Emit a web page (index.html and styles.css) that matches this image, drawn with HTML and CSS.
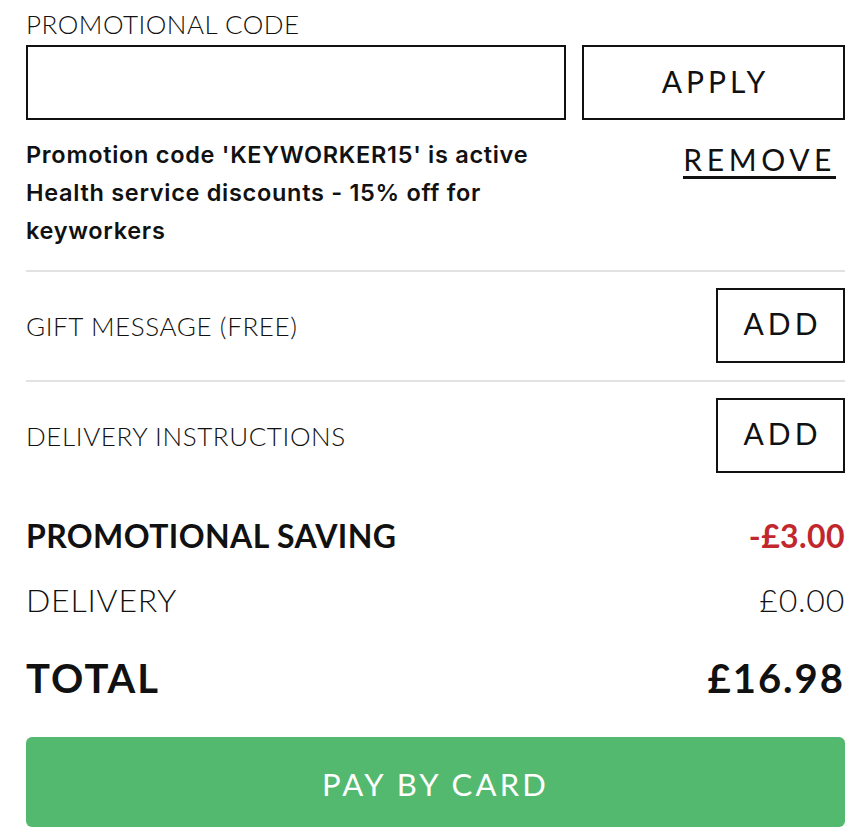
FILE: index.html
```html
<!DOCTYPE html>
<html>
<head>
<meta charset="utf-8">
<link rel="stylesheet" href="styles.css">
</head>
<body>
<div class="panel">
  <div class="label">PROMOTIONAL CODE</div>
  <div class="code-row">
    <div class="code-input"></div>
    <div class="btn apply">APPLY</div>
  </div>
  <div class="promo-row">
    <div class="promo-text">Promotion code 'KEYWORKER15' is active<br>Health service discounts - 15% off for<br>keyworkers</div>
    <div class="remove">REMOVE</div>
  </div>
  <div class="option-row first">
    <div class="option-label">GIFT MESSAGE (FREE)</div>
    <div class="btn add">ADD</div>
  </div>
  <div class="option-row last">
    <div class="option-label">DELIVERY INSTRUCTIONS</div>
    <div class="btn add">ADD</div>
  </div>
  <div class="sum-row saving">
    <div>PROMOTIONAL SAVING</div>
    <div class="red">-£3.00</div>
  </div>
  <div class="sum-row delivery">
    <div>DELIVERY</div>
    <div>£0.00</div>
  </div>
  <div class="sum-row total">
    <div>TOTAL</div>
    <div>£16.98</div>
  </div>
  <div class="pay">PAY BY CARD</div>
</div>
</body>
</html>
```

FILE: styles.css
```css
html, body {
  margin: 0;
  padding: 0;
  background: #fff;
}
body {
  font-family: Lato, "Open Sans", sans-serif;
  color: #111;
}
.panel {
  width: 819px;
  margin-left: 26px;
  display: flex;
  flex-direction: column;
}
.label {
  font-size: 26px;
  font-weight: 300;
  letter-spacing: 0.5px;
  line-height: 30px;
  margin-top: 9px;
  height: 36px;
}
.code-row {
  display: flex;
  gap: 16px;
  height: 75px;
}
.code-input {
  flex: 0 0 540px;
  box-sizing: border-box;
  border: 2.5px solid #111;
}
.btn {
  box-sizing: border-box;
  border: 2.5px solid #111;
  display: flex;
  align-items: center;
  justify-content: center;
  font-size: 30px;
  font-weight: 400;
  letter-spacing: 4px;
  padding-left: 4px;
}
.apply {
  flex: 1;
  padding-bottom: 4px;
}
.promo-row {
  display: flex;
  justify-content: space-between;
  align-items: flex-start;
  padding-top: 16px;
  padding-bottom: 20px;
  border-bottom: 2px solid #e2e2e2;
}
.promo-text {
  font-family: Inter, Lato, sans-serif;
  font-size: 23.5px;
  font-weight: 600;
  letter-spacing: 0.7px;
  line-height: 38px;
}
.remove {
  font-size: 30px;
  font-weight: 400;
  letter-spacing: 4.6px;
  line-height: 30px;
  margin-top: 8px;
  margin-right: 9px;
  padding-bottom: 2px;
  border-bottom: 3.5px solid #111;
}
.option-row {
  display: flex;
  justify-content: space-between;
  align-items: center;
  padding: 16px 0 17px;
}
.option-row.first {
  border-bottom: 2px solid #e2e2e2;
}
.option-row.last {
  padding-bottom: 0;
}
.option-label {
  font-size: 26px;
  font-weight: 300;
  letter-spacing: 0.6px;
}
.add {
  width: 129px;
  height: 75px;
  padding-bottom: 6px;
}
.sum-row {
  display: flex;
  justify-content: space-between;
  align-items: center;
}
.saving {
  margin-top: 41px;
  font-size: 32px;
  font-weight: 700;
  letter-spacing: 0.4px;
  height: 42px;
}
.red {
  color: #c1272d;
}
.delivery {
  margin-top: 22px;
  font-size: 32px;
  font-weight: 300;
  letter-spacing: 0.8px;
  height: 42px;
}
.total {
  margin-top: 34px;
  font-size: 40px;
  font-weight: 700;
  letter-spacing: 2px;
  height: 48px;
}
.pay {
  margin-top: 35px;
  height: 90px;
  border-radius: 6px;
  background: #52b96e;
  color: #fff;
  font-size: 31px;
  font-weight: 400;
  letter-spacing: 3.2px;
  display: flex;
  align-items: center;
  justify-content: center;
  padding-top: 4px;
  box-sizing: border-box;
}
```
